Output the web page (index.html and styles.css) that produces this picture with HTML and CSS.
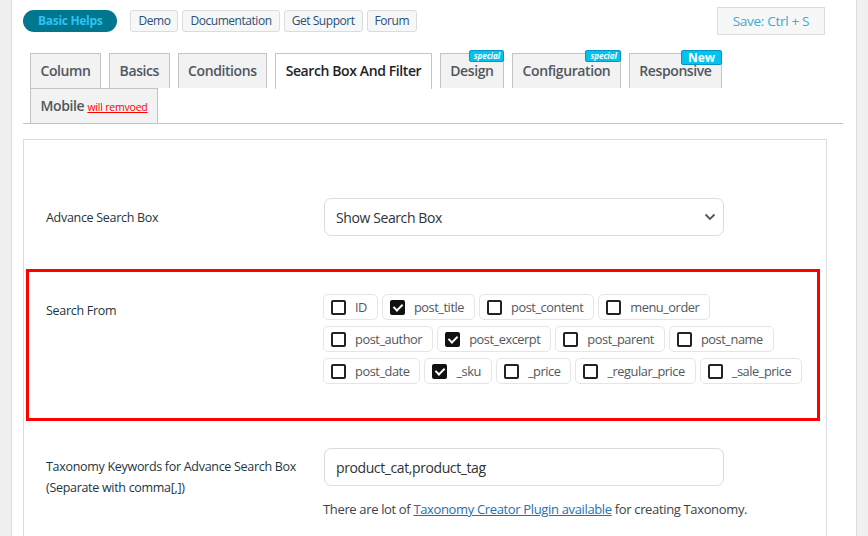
FILE: index.html
```html
<!DOCTYPE html>
<html lang="en">
<head>
<meta charset="utf-8">
<link rel="stylesheet" href="styles.css">
</head>
<body>
<div class="wrap">
  <div class="topbar">
    <div class="helps">
      <span class="pill">Basic Helps</span>
      <a class="hbtn">Demo</a>
      <a class="hbtn">Documentation</a>
      <a class="hbtn">Get Support</a>
      <a class="hbtn">Forum</a>
    </div>
    <button class="save">Save: Ctrl + S</button>
  </div>
  <div class="tabs">
    <div class="tab">Column</div>
    <div class="tab">Basics</div>
    <div class="tab">Conditions</div>
    <div class="tab active">Search Box And Filter</div>
    <div class="tab">Design<span class="badge special">special</span></div>
    <div class="tab">Configuration<span class="badge special">special</span></div>
    <div class="tab">Responsive<span class="badge new">New</span></div>
    <div class="tab">Mobile <a class="removed">will remvoed</a></div>
  </div>
  <div class="panel">
    <div class="row first">
      <div class="label">Advance Search Box</div>
      <div class="control">
        <div class="select">Show Search Box
          <svg class="chev" width="12" height="8" viewBox="0 0 12 8"><path d="M1.5 1.5 L6 6 L10.5 1.5" fill="none" stroke="#50575e" stroke-width="1.8"/></svg>
        </div>
      </div>
    </div>
    <div class="row boxed">
      <div class="label">Search From</div>
      <div class="control chips">
        <label class="chip"><span class="cb"></span>ID</label>
        <label class="chip"><span class="cb on"></span>post_title</label>
        <label class="chip"><span class="cb"></span>post_content</label>
        <label class="chip"><span class="cb"></span>menu_order</label>
        <label class="chip"><span class="cb"></span>post_author</label>
        <label class="chip"><span class="cb on"></span>post_excerpt</label>
        <label class="chip"><span class="cb"></span>post_parent</label>
        <label class="chip"><span class="cb"></span>post_name</label>
        <label class="chip"><span class="cb"></span>post_date</label>
        <label class="chip"><span class="cb on"></span>_sku</label>
        <label class="chip"><span class="cb"></span>_price</label>
        <label class="chip"><span class="cb"></span>_regular_price</label>
        <label class="chip"><span class="cb"></span>_sale_price</label>
      </div>
    </div>
    <div class="row tax">
      <div class="label">Taxonomy Keywords for Advance Search Box<br>(Separate with comma[,])</div>
      <div class="control">
        <div class="input">product_cat,product_tag</div>
        <p class="help">There are lot of <a class="link">Taxonomy Creator Plugin available</a> for creating Taxonomy.</p>
      </div>
    </div>
  </div>
</div>
</body>
</html>
```
FILE: styles.css
```css
html, body { margin: 0; padding: 0; }
body {
  background: #f0f0f1;
  font-family: "Open Sans", "Noto Sans", sans-serif;
  color: #3c434a;
  height: 536px;
  overflow: hidden;
}
.wrap {
  margin-left: 11px;
  width: 846px;
  background: #fff;
  border-left: 1px solid #dcdcde;
  border-right: 1px solid #dcdcde;
  min-height: 536px;
  box-sizing: border-box;
  padding: 7px 31px 0 11px;
}
.topbar {
  display: flex;
  justify-content: space-between;
  align-items: flex-start;
  height: 46px;
}
.helps { display: flex; gap: 4px; align-items: center; margin-top: 3px; }
.pill {
  background: #00768f;
  color: #2ec3f2;
  font-weight: 700;
  font-size: 12px;
  height: 22px;
  line-height: 22px;
  padding: 0 15px;
  border-radius: 12px;
  margin-right: 9px;
  letter-spacing: -0.3px;
}
.hbtn {
  font-size: 12px;
  color: #2c4f76;
  background: #f6f7f7;
  border: 1px solid #dcdcde;
  border-radius: 3px;
  height: 20px;
  line-height: 20px;
  padding: 0 7px;
  letter-spacing: -0.45px;
}
.save {
  font-family: inherit;
  font-size: 13.5px;
  color: #3aaad8;
  background: #f6f7f7;
  border: 1px solid #dcdcde;
  width: 108px;
  height: 28px;
  padding: 0;
  letter-spacing: -0.3px;
}
.tabs {
  display: flex;
  flex-wrap: wrap;
  column-gap: 8px;
  padding-left: 7px;
  border-bottom: 1px solid #c3c4c7;
  width: 813px;
}
.tab {
  position: relative;
  height: 35px;
  line-height: 34px;
  box-sizing: border-box;
  border: 1px solid #c3c4c7;
  border-bottom: none;
  background: #f2f2f2;
  padding: 0 9.5px;
  font-size: 14px;
  font-weight: 600;
  color: #50575e;
  letter-spacing: -0.4px;
}
.tab.active { background: #fff; color: #1d2327; margin-bottom: -1px; height: 36px; }
.removed {
  color: #ff0000;
  font-size: 10.5px;
  font-weight: 400;
  text-decoration: underline;
  letter-spacing: -0.2px;
}
.badge {
  position: absolute;
  right: -1px;
  top: -4px;
  background: #00c4f0;
  border: 1px solid #0895c4;
  color: #fff;
  border-radius: 2px;
  line-height: 9px;
}
.badge.special {
  font-size: 8px;
  font-style: italic;
  font-weight: 700;
  padding: 0 3px 1px 4px;
  height: 9px;
  letter-spacing: 0;
}
.badge.new {
  font-size: 12px;
  font-weight: 700;
  height: 13px;
  line-height: 13px;
  padding: 0 6px;
  letter-spacing: 0;
}
.panel {
  margin-top: 15px;
  width: 804px;
  border: 1px solid #dcdcde;
  box-sizing: border-box;
  padding-top: 58px;
  min-height: 400px;
}
.row {
  display: flex;
  padding: 0 20px 0 22px;
}
.label {
  width: 278px;
  font-size: 12.5px;
  color: #1d3540;
  letter-spacing: -0.3px;
  flex-shrink: 0;
}
.first { align-items: center; height: 38px; }
.select, .input {
  width: 400px;
  height: 38px;
  box-sizing: border-box;
  border: 1px solid #dcdcde;
  border-radius: 7px;
  font-size: 14px;
  color: #2c3338;
  padding-left: 11px;
  display: flex;
  align-items: center;
  justify-content: space-between;
  padding-right: 7px;
  letter-spacing: -0.4px;
}
.boxed {
  margin: 33px 6px 0 2px;
  border: 3px solid #ff0000;
  padding: 22px 2px 34px 17px;
}
.boxed .label { padding-top: 8px; width: 277px; }
.chips {
  display: flex;
  flex-wrap: wrap;
  align-content: flex-start;
  gap: 6px 4px;
  width: 493px;
}
.chip {
  display: flex;
  align-items: center;
  height: 26px;
  box-sizing: border-box;
  border: 1px solid #e5e5e5;
  border-radius: 5px;
  padding: 0 10px 0 7px;
  font-size: 12.8px;
  color: #50575e;
  letter-spacing: -0.45px;
}
.cb {
  width: 15px;
  height: 15px;
  box-sizing: border-box;
  border: 2px solid #222;
  border-radius: 2px;
  margin-right: 9px;
  position: relative;
}
.cb.on { background: #111; border-color: #111; }
.cb.on::after {
  content: "";
  position: absolute;
  left: 3px;
  top: 0px;
  width: 4px;
  height: 7px;
  border: solid #fff;
  border-width: 0 2px 2px 0;
  transform: rotate(45deg);
}
.tax { margin-top: 27px; }
.tax .label { line-height: 21px; padding-top: 8px; }
.input { justify-content: flex-start; }
.help {
  margin: 14px 0 0 -1px;
  font-size: 13px;
  color: #3c434a;
  letter-spacing: -0.35px;
}
.link { color: #2271b1; text-decoration: underline; }
```
